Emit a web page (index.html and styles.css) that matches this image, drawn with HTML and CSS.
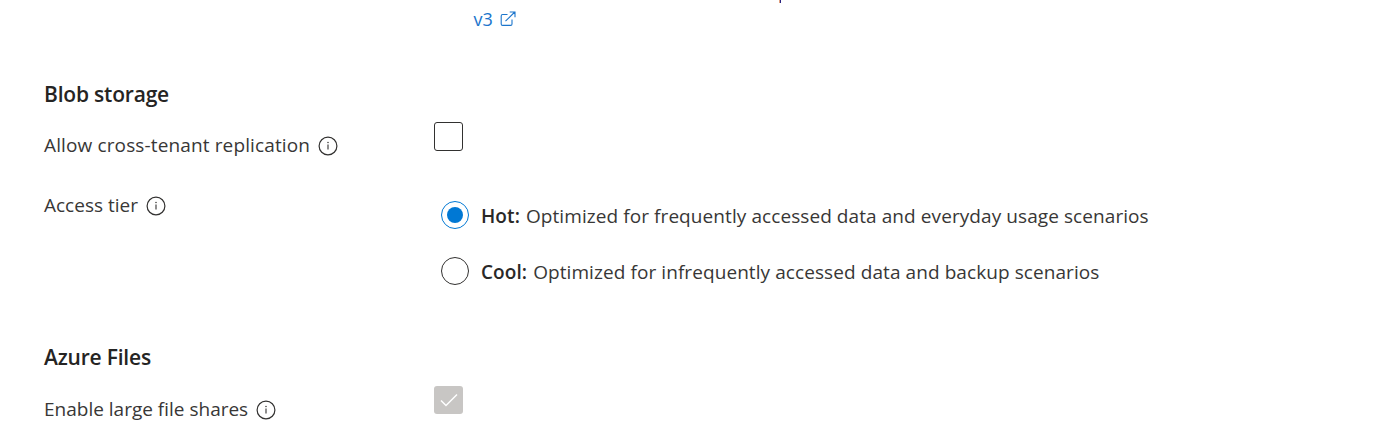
FILE: index.html
```
<!DOCTYPE html>
<html lang="en">
<head>
<meta charset="utf-8">
<title>Storage account settings</title>
<link rel="stylesheet" href="styles.css">
</head>
<body>
<svg width="0" height="0" class="defs">
  <symbol id="info" viewBox="0 0 20 20"><circle cx="10" cy="10" r="8.9" fill="none" stroke="currentColor" stroke-width="1.2"/><path d="M10 8.4V13.6" stroke="currentColor" stroke-width="1.1"/><circle cx="10" cy="6.5" r=".75" fill="currentColor"/></symbol>
</svg>
<main class="form">
  <div class="link-row">
    <span class="stem"></span>
    <a class="link"><span class="link-text">v3</span><svg class="external" viewBox="0 0 16 16"><path d="M7.5 3.5H2.6Q1.2 3.5 1.2 4.9V13Q1.2 14.4 2.6 14.4H10.6Q12 14.4 12 13V8.5M5.5 10.2L14.8 1M9.7 1H15V6.3" fill="none" stroke="currentColor" stroke-width="1.1"/></svg></a>
  </div>
  <section class="section blob">
    <h2 class="heading">Blob storage</h2>
    <div class="row replication">
      <div class="label"><span class="l-rep">Allow cross-tenant replication</span><svg class="info"><use href="#info"/></svg></div>
      <span class="checkbox"></span>
    </div>
    <div class="row tier">
      <div class="label"><span>Access tier</span><svg class="info"><use href="#info"/></svg></div>
      <div class="radios">
        <div class="option"><span class="radio selected"></span><p class="text"><b>Hot:</b><span>Optimized for frequently accessed data and everyday usage scenarios</span></p></div>
        <div class="option"><span class="radio"></span><p class="text"><b>Cool:</b><span>Optimized for infrequently accessed data and backup scenarios</span></p></div>
      </div>
    </div>
  </section>
  <section class="section files">
    <h2 class="heading">Azure Files</h2>
    <div class="row shares">
      <div class="label"><span>Enable large file shares</span><svg class="info"><use href="#info"/></svg></div>
      <span class="checkbox disabled"><svg class="check" viewBox="0 0 18 14"><path d="M1 7.5L6 12.5L17 1.5" fill="none" stroke="#fff" stroke-width="1.5"/></svg></span>
    </div>
  </section>
</main>
</body>
</html>
```
FILE: styles.css
```
* { box-sizing: border-box; }
body { margin: 0; background: #fff; color: #383736; font: 19px/26px "Open Sans", "Noto Sans", sans-serif; overflow: hidden; }
.defs { display: none; }
.form { height: 437px; padding-left: 44px; overflow: hidden; }
.link-row { height: 81px; padding-left: 429px; }
.stem { display: block; width: 2px; height: 3px; margin-left: 306px; background: linear-gradient(90deg, #e0a080 50%, #2a2380 50%); }
.link { display: flex; align-items: flex-start; padding-top: 3px; color: #1b75cc; font-size: 18px; }
.link-text { width: 26px; padding-left: 0.5px; }
.external { width: 16px; height: 16px; margin: 5px 0 0 0.5px; }
.blob { height: 263px; }
.heading { height: 26px; margin: 0; font-size: 21px; line-height: 26px; font-weight: 600; letter-spacing: -0.2px; color: #252423; }
.row { display: grid; grid-template-columns: 390px 1fr; align-items: start; }
.label { display: flex; white-space: nowrap; }
.l-rep { letter-spacing: 0.13px; }
.info { width: 20px; height: 20px; margin: 4px 0 0 8px; color: #323130; }
.replication { height: 71px; padding-top: 15px; }
.replication .label { padding-top: 10px; }
.tier { padding-top: 14px; }
.radios { display: flex; flex-direction: column; gap: 28px; padding: 9px 0 0 7px; }
.option { display: flex; gap: 12px; height: 28px; }
.radio { display: flex; align-items: center; justify-content: center; width: 28px; height: 28px; border: 1px solid #323130; border-radius: 50%; }
.selected { border-color: #0078d4; }
.selected::after { content: ""; width: 16px; height: 16px; border-radius: 50%; background: #0078d4; }
.text { display: flex; gap: 6px; margin: 2px 0 0; white-space: nowrap; letter-spacing: 0.08px; }
.text b { font-weight: 600; color: #292827; }
.checkbox { display: flex; align-items: center; justify-content: center; width: 29px; height: 29px; border: 1px solid #323130; border-radius: 3px; }
.disabled { height: 28px; border: 0; background: #c8c6c4; }
.check { width: 18px; height: 14px; }
.shares { padding-top: 16px; }
.shares .label { padding-top: 10px; }
```
